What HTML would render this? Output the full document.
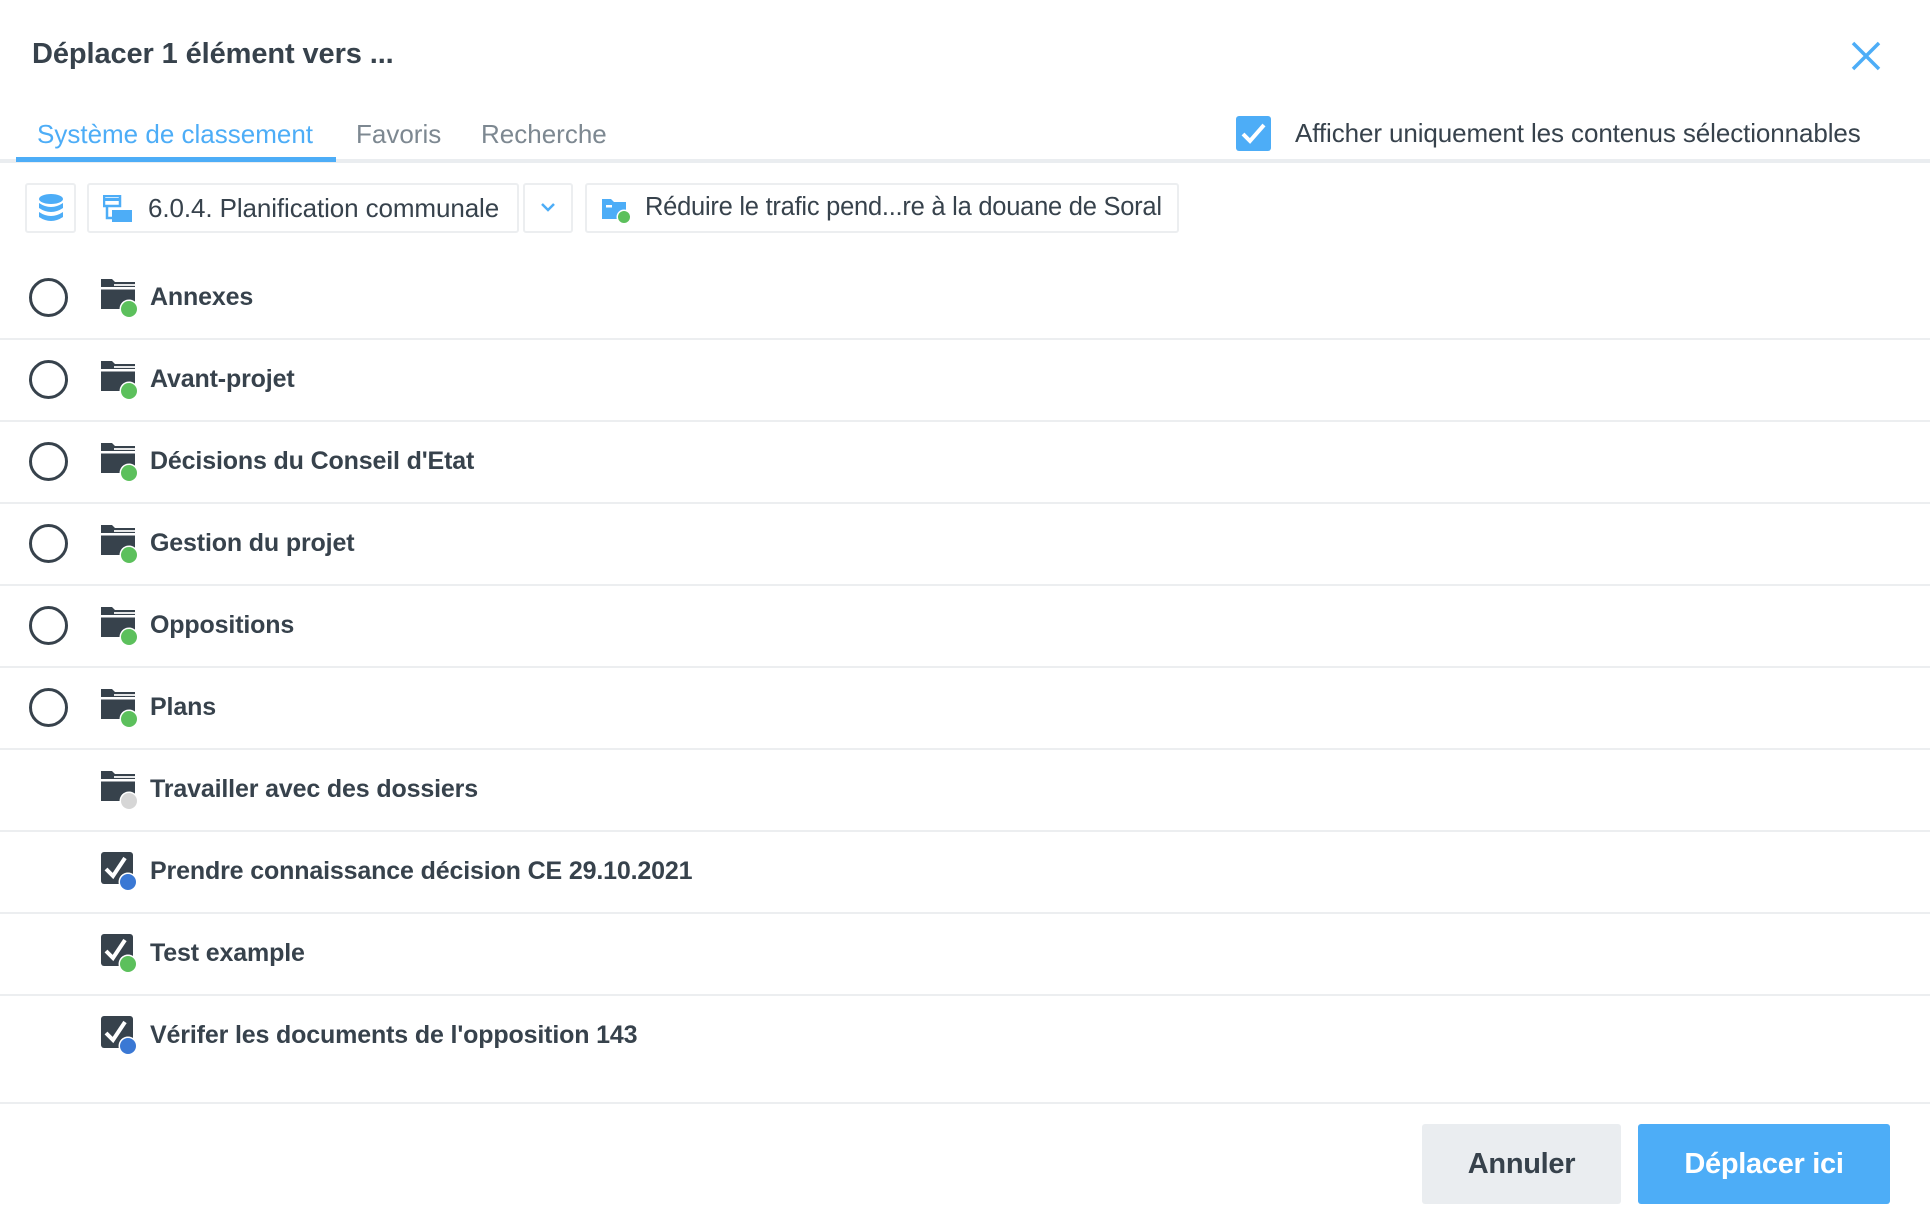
<!DOCTYPE html>
<html><head><meta charset="utf-8"><style>
*{margin:0;padding:0;box-sizing:border-box}
body{width:1930px;height:1218px;background:#fff;font-family:"Liberation Sans",sans-serif;color:#37424c;position:relative;overflow:hidden}
.a{position:absolute;white-space:nowrap}
.title{left:32px;top:38px;font-size:29px;font-weight:bold;letter-spacing:-0.1px}
.tab{top:119px;font-size:26px;color:#7d8891}
.sep{position:absolute;left:0;width:1930px;height:2px;background:#eceef0}
.btn{position:absolute;top:183px;height:50px;border:2px solid #eceef0;border-radius:3px}
.row{position:absolute;left:0;width:1930px;height:82px}
.radio{position:absolute;left:29px;top:22px;width:39px;height:39px;border:3.5px solid #37424c;border-radius:50%}
.ic{position:absolute;left:101px;top:22px}
.lbl{position:absolute;left:150px;top:27px;font-size:25px;font-weight:bold;color:#37424c;letter-spacing:-0.15px}
</style></head><body>
<div class="a title">Déplacer 1 élément vers ...</div>
<svg class="a" style="left:1850px;top:40px" width="32" height="32" viewBox="0 0 32 32"><path d="M3 3L29 29M29 3L3 29" stroke="#4dadf7" stroke-width="3.5"/></svg>

<div class="a tab" style="left:37px;color:#4dadf7">Système de classement</div>
<div class="a tab" style="left:356px">Favoris</div>
<div class="a tab" style="left:481px">Recherche</div>
<div class="a" style="left:0;top:159px;width:1930px;height:4px;background:#eaedf0"></div>
<div class="a" style="left:16px;top:157px;width:320px;height:5px;background:#4dadf7"></div>

<div class="a" style="left:1236px;top:116px;width:35px;height:35px;background:#4dadf7;border-radius:3px"></div>
<svg class="a" style="left:1236px;top:116px" width="35" height="35" viewBox="0 0 35 35"><path d="M7 18L14 25L28 9" stroke="#fff" stroke-width="4" fill="none"/></svg>
<div class="a" style="left:1295px;top:118px;font-size:26px;color:#37424c;letter-spacing:-0.1px">Afficher uniquement les contenus sélectionnables</div>

<div class="btn" style="left:25px;width:51px"></div>
<svg class="a" style="left:37px;top:193px" width="28" height="30" viewBox="0 0 28 30"><ellipse cx="14" cy="6" rx="12" ry="5" fill="#4dadf7"/><path d="M2 10q12 8 24 0v5q-12 8 -24 0z" fill="#4dadf7"/><path d="M2 19q12 8 24 0v5q-12 8 -24 0z" fill="#4dadf7"/></svg>
<div class="btn" style="left:87px;width:432px"></div>
<svg class="a" style="left:103px;top:195px" width="30" height="28" viewBox="0 0 30 28"><rect x="1" y="1" width="16" height="10" fill="none" stroke="#4dadf7" stroke-width="2.5"/><rect x="2" y="3" width="14" height="3" fill="#4dadf7"/><path d="M4 11v12h6" stroke="#4dadf7" stroke-width="2.5" fill="none"/><rect x="9" y="15" width="20" height="12" fill="#4dadf7"/></svg>
<div class="a" style="left:148px;top:193px;font-size:26px;letter-spacing:-0.1px">6.0.4. Planification communale</div>
<div class="btn" style="left:523px;width:50px"></div>
<svg class="a" style="left:539px;top:200px" width="18" height="14" viewBox="0 0 18 14"><path d="M3 4L9 10L15 4" stroke="#4dadf7" stroke-width="2.5" fill="none"/></svg>
<div class="btn" style="left:585px;width:594px"></div>
<svg class="a" style="left:600px;top:193px" width="34" height="34" viewBox="0 0 34 34"><path d="M2 6h9l3 3h12v17h-24z" fill="#4dadf7"/><rect x="6" y="12" width="6" height="2.5" fill="#fff"/><circle cx="24" cy="24" r="7.5" fill="#fff"/><circle cx="24" cy="24" r="6" fill="#5cc05c"/></svg>
<div class="a" style="left:645px;top:193px;font-size:25.5px;letter-spacing:-0.25px">Réduire le trafic pend...re à la douane de Soral</div>

<svg width="0" height="0" style="position:absolute"><defs>
<g id="fold"><path d="M0 1h11l3 3h20v5h-34z" fill="#37424c"/><path d="M0 11h34v20h-34z" fill="#37424c"/><path d="M13 7h21" stroke="#fff" stroke-width="1.8"/><path d="M0 10.5h34" stroke="#fff" stroke-width="2"/></g>
<g id="task"><rect x="0" y="0" width="32" height="32" rx="3" fill="#37424c"/><path d="M5 17L12 24L24 6" stroke="#fff" stroke-width="4" fill="none"/></g>
</defs></svg>

<div class="row" style="top:256px"><div class="radio"></div><svg class="ic" width="40" height="42"><use href="#fold"/><circle cx="28" cy="31" r="9.5" fill="#fff"/><circle cx="28" cy="31" r="8" fill="#5cc05c"/></svg><div class="lbl">Annexes</div></div>
<div class="sep" style="top:338px"></div>
<div class="row" style="top:338px"><div class="radio"></div><svg class="ic" width="40" height="42"><use href="#fold"/><circle cx="28" cy="31" r="9.5" fill="#fff"/><circle cx="28" cy="31" r="8" fill="#5cc05c"/></svg><div class="lbl">Avant-projet</div></div>
<div class="sep" style="top:420px"></div>
<div class="row" style="top:420px"><div class="radio"></div><svg class="ic" width="40" height="42"><use href="#fold"/><circle cx="28" cy="31" r="9.5" fill="#fff"/><circle cx="28" cy="31" r="8" fill="#5cc05c"/></svg><div class="lbl">Décisions du Conseil d'Etat</div></div>
<div class="sep" style="top:502px"></div>
<div class="row" style="top:502px"><div class="radio"></div><svg class="ic" width="40" height="42"><use href="#fold"/><circle cx="28" cy="31" r="9.5" fill="#fff"/><circle cx="28" cy="31" r="8" fill="#5cc05c"/></svg><div class="lbl">Gestion du projet</div></div>
<div class="sep" style="top:584px"></div>
<div class="row" style="top:584px"><div class="radio"></div><svg class="ic" width="40" height="42"><use href="#fold"/><circle cx="28" cy="31" r="9.5" fill="#fff"/><circle cx="28" cy="31" r="8" fill="#5cc05c"/></svg><div class="lbl">Oppositions</div></div>
<div class="sep" style="top:666px"></div>
<div class="row" style="top:666px"><div class="radio"></div><svg class="ic" width="40" height="42"><use href="#fold"/><circle cx="28" cy="31" r="9.5" fill="#fff"/><circle cx="28" cy="31" r="8" fill="#5cc05c"/></svg><div class="lbl">Plans</div></div>
<div class="sep" style="top:748px"></div>
<div class="row" style="top:748px"><svg class="ic" width="40" height="42"><use href="#fold"/><circle cx="28" cy="31" r="9.5" fill="#fff"/><circle cx="28" cy="31" r="8" fill="#d6d6d6"/></svg><div class="lbl">Travailler avec des dossiers</div></div>
<div class="sep" style="top:830px"></div>
<div class="row" style="top:830px"><svg class="ic" width="40" height="42"><use href="#task"/><circle cx="27" cy="30" r="9.5" fill="#fff"/><circle cx="27" cy="30" r="8" fill="#3a78d4"/></svg><div class="lbl">Prendre connaissance décision CE 29.10.2021</div></div>
<div class="sep" style="top:912px"></div>
<div class="row" style="top:912px"><svg class="ic" width="40" height="42"><use href="#task"/><circle cx="27" cy="30" r="9.5" fill="#fff"/><circle cx="27" cy="30" r="8" fill="#5cc05c"/></svg><div class="lbl">Test example</div></div>
<div class="sep" style="top:994px"></div>
<div class="row" style="top:994px"><svg class="ic" width="40" height="42"><use href="#task"/><circle cx="27" cy="30" r="9.5" fill="#fff"/><circle cx="27" cy="30" r="8" fill="#3a78d4"/></svg><div class="lbl">Vérifer les documents de l'opposition 143</div></div>

<div class="sep" style="top:1102px"></div>
<div class="a" style="left:1422px;top:1124px;width:199px;height:80px;background:#eaedf0;border-radius:3px;font-size:29px;font-weight:bold;text-align:center;line-height:80px;color:#37424c;letter-spacing:-0.3px">Annuler</div>
<div class="a" style="left:1638px;top:1124px;width:252px;height:80px;background:#4dadf7;border-radius:3px;font-size:29px;font-weight:bold;text-align:center;line-height:80px;color:#fff;letter-spacing:-0.3px">Déplacer ici</div>
</body></html>
